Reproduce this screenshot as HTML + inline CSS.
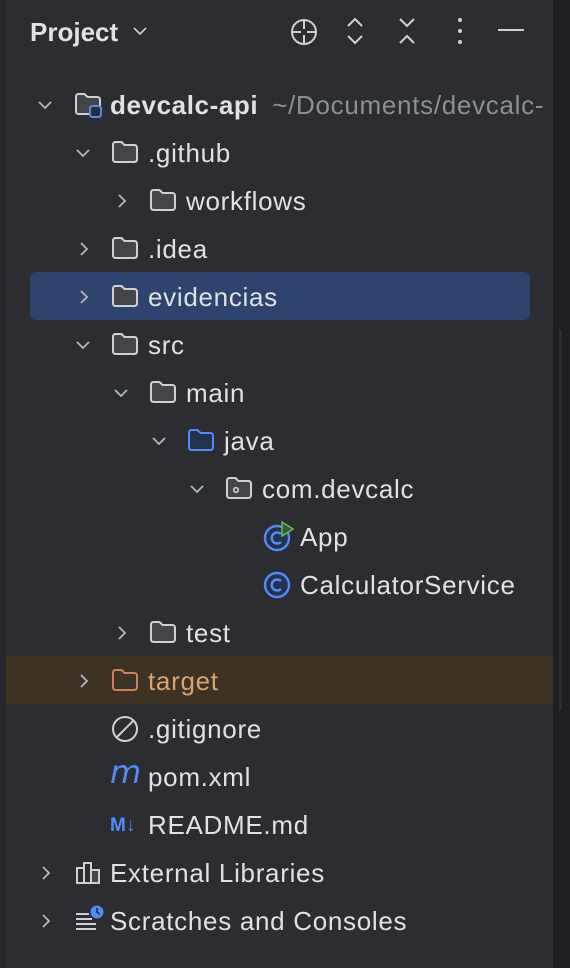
<!DOCTYPE html><html><head><meta charset="utf-8"><style>
body{margin:0;width:570px;height:968px;background:#2b2d30;overflow:hidden;font-family:"Liberation Sans",sans-serif;position:relative}
.r{position:absolute;left:0;height:48px;width:553px;overflow:hidden}
.t{position:absolute;top:11px;font-size:26px;letter-spacing:0.7px;color:#dfe1e5;white-space:nowrap;line-height:28px}
.ch{position:absolute;top:17px}
.ic{position:absolute}
</style></head><body>
<div style="position:absolute;left:0;top:0;width:6px;height:968px;background:#26282b"></div>
<div style="position:absolute;left:553px;top:0;width:17px;height:968px;background:#1e1f22"></div>
<div style="position:absolute;left:559px;top:330px;width:3px;height:380px;background:#2b2d30"></div>
<div style="position:absolute;left:30px;top:272px;width:500px;height:48px;background:#2e436e;border-radius:6px"></div>
<div style="position:absolute;left:6px;top:656px;width:547px;height:48px;background:#3d3223"></div>

<div style="position:absolute;left:30px;top:17px;font-size:26px;font-weight:bold;color:#dfe1e5">Project</div>
<svg style="position:absolute;left:132px;top:25px" width="16" height="12"><path d="M2 3l6 6 6-6" fill="none" stroke="#ced0d6" stroke-width="1.6"/></svg>
<svg style="position:absolute;left:288px;top:16px" width="32" height="32" fill="none" stroke="#ced0d6" stroke-width="2"><circle cx="16" cy="16" r="12"/><path d="M16 4v9M16 19v9M4 16h9M19 16h9"/></svg>
<svg style="position:absolute;left:344px;top:16px" width="22" height="30" fill="none" stroke="#ced0d6" stroke-width="2"><path d="M4 10l7-7 7 7M4 20l7 7 7-7"/></svg>
<svg style="position:absolute;left:396px;top:16px" width="22" height="30" fill="none" stroke="#ced0d6" stroke-width="2"><path d="M4 3l7 7 7-7M4 27l7-7 7 7"/></svg>
<svg style="position:absolute;left:454px;top:16px" width="12" height="30" fill="#ced0d6"><circle cx="6" cy="4" r="2"/><circle cx="6" cy="15" r="2"/><circle cx="6" cy="26" r="2"/></svg>
<div style="position:absolute;left:498px;top:29px;width:26px;height:2px;background:#ced0d6"></div>

<svg width="0" height="0" style="position:absolute"><defs>
<g id="f"><path d="M2 4.5a2.5 2.5 0 0 1 2.5-2.5h6l3 3h10a2.5 2.5 0 0 1 2.5 2.5v12a2.5 2.5 0 0 1-2.5 2.5h-19a2.5 2.5 0 0 1-2.5-2.5z" fill="#43454a" stroke="#ced0d6" stroke-width="2"/></g>
<g id="fb"><path d="M2 4.5a2.5 2.5 0 0 1 2.5-2.5h6l3 3h10a2.5 2.5 0 0 1 2.5 2.5v12a2.5 2.5 0 0 1-2.5 2.5h-19a2.5 2.5 0 0 1-2.5-2.5z" fill="#25324d" stroke="#548af7" stroke-width="2"/></g>
<g id="fo"><path d="M2 4.5a2.5 2.5 0 0 1 2.5-2.5h6l3 3h10a2.5 2.5 0 0 1 2.5 2.5v12a2.5 2.5 0 0 1-2.5 2.5h-19a2.5 2.5 0 0 1-2.5-2.5z" fill="#3d3223" stroke="#c7825b" stroke-width="2"/></g>
<path id="cd" d="M3 4l6 6 6-6" fill="none" stroke="#b4b8bf" stroke-width="1.8"/>
<path id="cr" d="M5 2l6 6-6 6" fill="none" stroke="#b4b8bf" stroke-width="1.8"/>
</defs></svg>

<div class="r" style="top:80px">
<svg class="ch" style="left:36px;top:18px" width="18" height="14"><use href="#cd"/></svg>
<svg class="ic" style="left:74px;top:12px" width="30" height="28"><use href="#f"/><rect x="16" y="14" width="11" height="11" rx="2.5" fill="#2b2d30" stroke="#548af7" stroke-width="2"/></svg>
<div class="t" style="left:110px;font-weight:bold;letter-spacing:0.6px">devcalc-api<span style="font-weight:normal;color:#8c8f94;letter-spacing:0.7px;margin-left:14px">~/Documents/devcalc-</span></div>
</div>
<div class="r" style="top:128px"><svg class="ch" style="left:74px;top:18px" width="18" height="14"><use href="#cd"/></svg><svg class="ic" style="left:111px;top:12px" width="28" height="24"><use href="#f"/></svg><div class="t" style="left:148px">.github</div></div>
<div class="r" style="top:176px"><svg class="ch" style="left:114px" width="16" height="16"><use href="#cr"/></svg><svg class="ic" style="left:149px;top:12px" width="28" height="24"><use href="#f"/></svg><div class="t" style="left:186px">workflows</div></div>
<div class="r" style="top:224px"><svg class="ch" style="left:76px" width="16" height="16"><use href="#cr"/></svg><svg class="ic" style="left:111px;top:12px" width="28" height="24"><use href="#f"/></svg><div class="t" style="left:148px">.idea</div></div>
<div class="r" style="top:272px"><svg class="ch" style="left:76px" width="16" height="16"><use href="#cr"/></svg><svg class="ic" style="left:111px;top:12px" width="28" height="24"><use href="#f"/></svg><div class="t" style="left:148px">evidencias</div></div>
<div class="r" style="top:320px"><svg class="ch" style="left:74px;top:18px" width="18" height="14"><use href="#cd"/></svg><svg class="ic" style="left:111px;top:12px" width="28" height="24"><use href="#f"/></svg><div class="t" style="left:148px">src</div></div>
<div class="r" style="top:368px"><svg class="ch" style="left:112px;top:18px" width="18" height="14"><use href="#cd"/></svg><svg class="ic" style="left:149px;top:12px" width="28" height="24"><use href="#f"/></svg><div class="t" style="left:186px">main</div></div>
<div class="r" style="top:416px"><svg class="ch" style="left:150px;top:18px" width="18" height="14"><use href="#cd"/></svg><svg class="ic" style="left:187px;top:12px" width="28" height="24"><use href="#fb"/></svg><div class="t" style="left:224px">java</div></div>
<div class="r" style="top:464px"><svg class="ch" style="left:188px;top:18px" width="18" height="14"><use href="#cd"/></svg><svg class="ic" style="left:225px;top:12px" width="28" height="24"><use href="#f"/><circle cx="11" cy="14" r="2.3" fill="none" stroke="#ced0d6" stroke-width="1.6"/></svg><div class="t" style="left:262px">com.devcalc</div></div>
<div class="r" style="top:512px"><svg class="ic" style="left:262px;top:8px" width="34" height="32"><circle cx="15" cy="18" r="12" fill="#25324d" stroke="#548af7" stroke-width="2.4"/><path d="M19 14a5.5 5.5 0 1 0 0 8" fill="none" stroke="#548af7" stroke-width="2.4"/><path d="M20 2l11 7-11 7z" fill="#3a5a2e" stroke="#5fb85a" stroke-width="1.6"/></svg><div class="t" style="left:300px">App</div></div>
<div class="r" style="top:560px"><svg class="ic" style="left:262px;top:10px" width="30" height="30"><circle cx="15" cy="15" r="12" fill="#25324d" stroke="#548af7" stroke-width="2.4"/><path d="M19 11a5.5 5.5 0 1 0 0 8" fill="none" stroke="#548af7" stroke-width="2.4"/></svg><div class="t" style="left:300px">CalculatorService</div></div>
<div class="r" style="top:608px"><svg class="ch" style="left:114px" width="16" height="16"><use href="#cr"/></svg><svg class="ic" style="left:149px;top:12px" width="28" height="24"><use href="#f"/></svg><div class="t" style="left:186px">test</div></div>
<div class="r" style="top:656px"><svg class="ch" style="left:76px" width="16" height="16"><use href="#cr"/></svg><svg class="ic" style="left:111px;top:12px" width="28" height="24"><use href="#fo"/></svg><div class="t" style="left:148px;color:#d9a271">target</div></div>
<div class="r" style="top:704px"><svg class="ic" style="left:111px;top:11px" width="28" height="28"><circle cx="14" cy="14" r="12" fill="none" stroke="#ced0d6" stroke-width="2"/><path d="M6 22L22 6" stroke="#ced0d6" stroke-width="2"/></svg><div class="t" style="left:148px">.gitignore</div></div>
<div class="r" style="top:752px"><div class="t" style="left:110px;top:6px;color:#548af7;font-style:italic;font-size:32px;letter-spacing:0;font-family:'DejaVu Sans',sans-serif">m</div><div class="t" style="left:148px">pom.xml</div></div>
<div class="r" style="top:800px"><div class="t" style="left:110px;top:12px;color:#548af7;font-weight:bold;font-size:19px;letter-spacing:0">M↓</div><div class="t" style="left:148px">README.md</div></div>
<div class="r" style="top:848px"><svg class="ch" style="left:38px" width="16" height="16"><use href="#cr"/></svg><svg class="ic" style="left:75px;top:12px" width="28" height="26" fill="none" stroke="#ced0d6" stroke-width="2"><rect x="2" y="8" width="7" height="15"/><rect x="9" y="3" width="7" height="20"/><rect x="16" y="10" width="8" height="13" fill="#43454a"/></svg><div class="t" style="left:110px">External Libraries</div></div>
<div class="r" style="top:896px"><svg class="ch" style="left:38px" width="16" height="16"><use href="#cr"/></svg><svg class="ic" style="left:75px;top:8px" width="30" height="30"><path d="M1 10h13M1 15h16M1 20h20M1 25h20" stroke="#ced0d6" stroke-width="2"/><circle cx="22" cy="8" r="6.5" fill="#548af7"/><path d="M22 4v4l2.5 2" stroke="#2b2d30" stroke-width="1.6" fill="none"/></svg><div class="t" style="left:110px">Scratches and Consoles</div></div>
</body></html>
